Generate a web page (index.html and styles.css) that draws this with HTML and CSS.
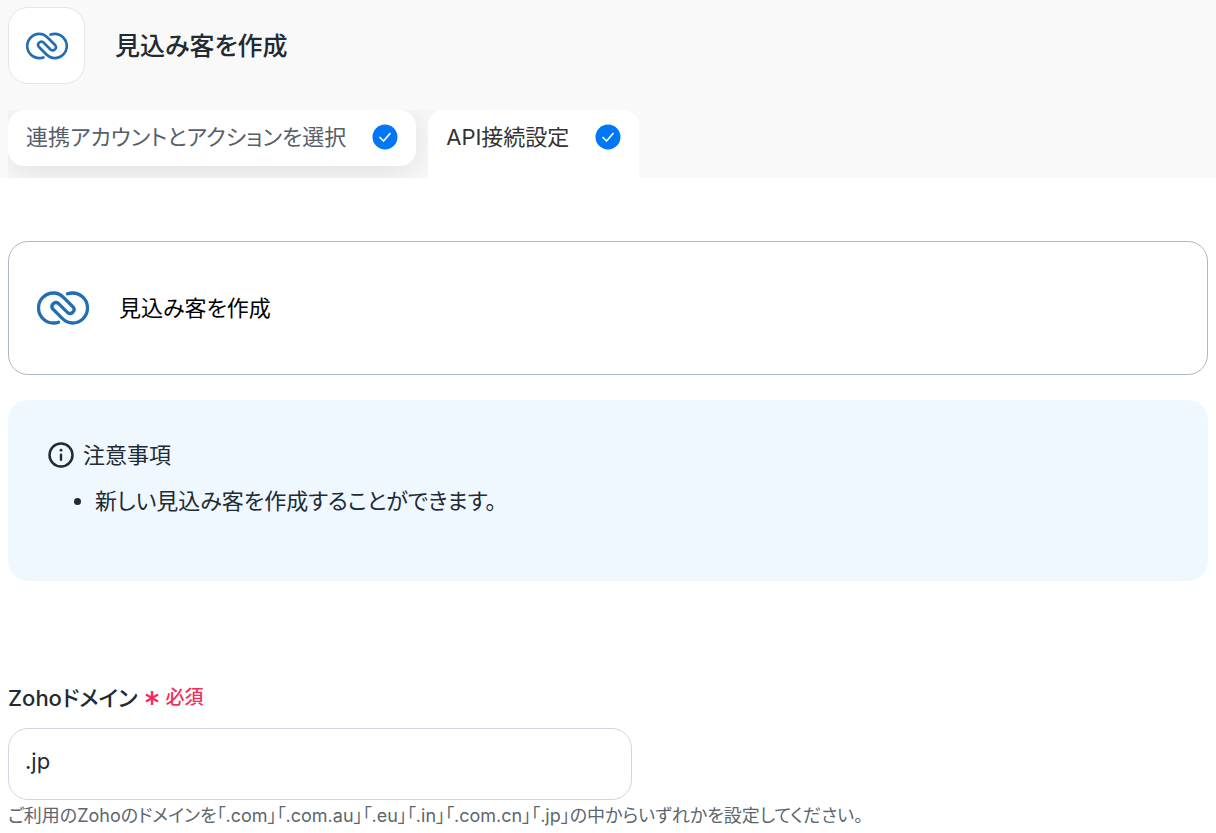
FILE: index.html
```html
<!DOCTYPE html>
<html lang="ja">
<head>
  <meta charset="UTF-8">
  <title>見込み客を作成</title>
  <meta name="viewport" content="width=device-width, initial-scale=1.0">
  <link rel="stylesheet" href="styles.css">
</head>
<body>

  <!-- Shared icons -->
  <svg class="sprite" aria-hidden="true">
    <symbol id="icon-link" viewBox="0 0 52 34">
      <path d="M21.5 31.2C20 31.8 18 32 16.5 32A15 15 0 0 1 16.5 2C21 2 24 3.800 27 6.800L36.200 16A4 4 0 0 1 30.600 21.600L21.400 12.400A4 4 0 0 0 15.800 18L25 27.200C28 30.200 31 32 35.500 32A15 15 0 0 0 35.500 2C33.500 2 32 2.300 30.500 2.800"/>
    </symbol>
    <symbol id="icon-check" viewBox="0 0 26 26">
      <circle cx="13" cy="13" r="12.500"/>
      <path d="M7.500 13l4 4 7-8"/>
    </symbol>
  </svg>

  <header class="header">
    <div class="title-row">
      <div class="app-icon">
        <svg class="link-icon" aria-hidden="true"><use href="#icon-link"/></svg>
      </div>
      <h1 class="title">見込み客を作成</h1>
    </div>

    <nav class="tabs">
      <button type="button" class="tab">
        連携アカウントとアクションを選択
        <svg class="check" aria-hidden="true"><use href="#icon-check"/></svg>
      </button>
      <button type="button" class="tab active">
        API接続設定
        <svg class="check" aria-hidden="true"><use href="#icon-check"/></svg>
      </button>
    </nav>
  </header>

  <main class="content">
    <section class="action-card">
      <svg class="link-icon large" aria-hidden="true"><use href="#icon-link"/></svg>
      <span>見込み客を作成</span>
    </section>

    <section class="notice">
      <h2 class="notice-title">
        <svg class="info" viewBox="0 0 26 26" aria-hidden="true">
          <circle class="ring" cx="13" cy="13" r="11.500"/>
          <circle cx="13" cy="8.200" r="1.400"/>
          <rect x="11.800" y="11.500" width="2.400" height="7.500" rx="1.200"/>
        </svg>
        注意事項
      </h2>
      <ul class="notice-list">
        <li>新しい見込み客を作成することができます。</li>
      </ul>
    </section>

    <div class="field">
      <label class="field-label" for="domain">
        Zohoドメイン
        <span class="required">
          <svg class="asterisk" viewBox="0 0 16 16" aria-hidden="true"><path d="M8 1v14M2 4.500l12 7M14 4.500l-12 7"/></svg>
          必須
        </span>
      </label>
      <input type="text" id="domain" class="field-input" value=".jp" aria-describedby="domain-help">
      <p class="help" id="domain-help">ご利用のZohoのドメインを「.com」「.com.au」「.eu」「.in」「.com.cn」「.jp」の中からいずれかを設定してください。</p>
    </div>
  </main>

</body>
</html>
```
FILE: styles.css
```css
* {
  box-sizing: border-box;
}

body {
  margin: 0;
  font-family: Inter, "Noto Sans CJK JP", sans-serif;
  font-feature-settings: "palt";
  font-size: 22px;
  line-height: 32px;
  color: #222a33;
  background: #fff;
}

.sprite {
  display: none;
}

/* Header */
.header {
  background: #f9f9f9;
  padding: 7px 8px 0;
}

.title-row {
  display: flex;
  align-items: center;
  gap: 30px;
  margin-bottom: 26px;
}

.app-icon {
  display: flex;
  align-items: center;
  justify-content: center;
  width: 77px;
  height: 77px;
  background: #fff;
  border: 1px solid #e5e5e5;
  border-radius: 20px;
}

.title {
  margin: 0;
  font-size: 25px;
  font-weight: 500;
}

.link-icon {
  width: 42px;
  height: 28px;
  fill: none;
  stroke: #226db4;
  stroke-width: 3.3;
  stroke-linecap: round;
}

.link-icon.large {
  width: 52px;
  height: 34px;
}

/* Tabs */
.tabs {
  display: flex;
  align-items: flex-start;
  gap: 12px;
  width: fit-content;
  overflow: hidden;
}

.tab {
  display: flex;
  align-items: center;
  gap: 26px;
  height: 56px;
  padding: 0 18px 2px;
  border: none;
  border-radius: 16px;
  background: #fff;
  box-shadow: 0 4px 40px rgba(0, 0, 0, 0.12);
  color: #56606a;
  font: inherit;
  font-feature-settings: inherit;
  white-space: nowrap;
  cursor: pointer;
}

.tab.active {
  height: 68px;
  padding-bottom: 14px;
  border-radius: 16px 16px 0 0;
  box-shadow: none;
  color: #333;
}

.check {
  width: 26px;
  height: 26px;
  fill: #0277f5;
}

#icon-check path {
  fill: none;
  stroke: #fff;
  stroke-width: 1.6;
}

/* Content */
.content {
  padding: 63px 8px 0;
}

.action-card {
  display: flex;
  align-items: center;
  gap: 30px;
  padding: 49px 28px;
  border: 1px solid #adb8c2;
  border-radius: 20px;
  color: #000;
}

.notice {
  margin-top: 25px;
  padding: 39px 40px 64px;
  border-radius: 20px;
  background: #eff7ff;
}

.notice-title {
  display: flex;
  align-items: center;
  gap: 9px;
  margin: 0 0 14px;
  font-size: 22px;
  font-weight: 400;
}

.info {
  width: 26px;
  height: 26px;
  fill: #222a33;
}

.ring {
  fill: none;
  stroke: #222a33;
  stroke-width: 2.5;
}

.notice-list {
  margin: 0;
  padding-left: 47px;
}

/* Field */
.field {
  margin-top: 101px;
}

.field-label {
  display: flex;
  align-items: center;
  gap: 7px;
  font-weight: 500;
}

.required {
  display: flex;
  align-items: center;
  gap: 5px;
  font-size: 19px;
  color: #f52e5d;
}

.asterisk {
  width: 16px;
  height: 16px;
  fill: none;
  stroke: #f52e5d;
  stroke-width: 2.5;
}

.field-input {
  display: block;
  width: 52%;
  height: 72px;
  margin-top: 14px;
  padding: 0 16px 6px;
  border: 1px solid #d0d5df;
  border-radius: 20px;
  font: inherit;
  color: inherit;
}

.help {
  margin: 0;
  font-size: 18px;
  color: #5c6670;
}
```
